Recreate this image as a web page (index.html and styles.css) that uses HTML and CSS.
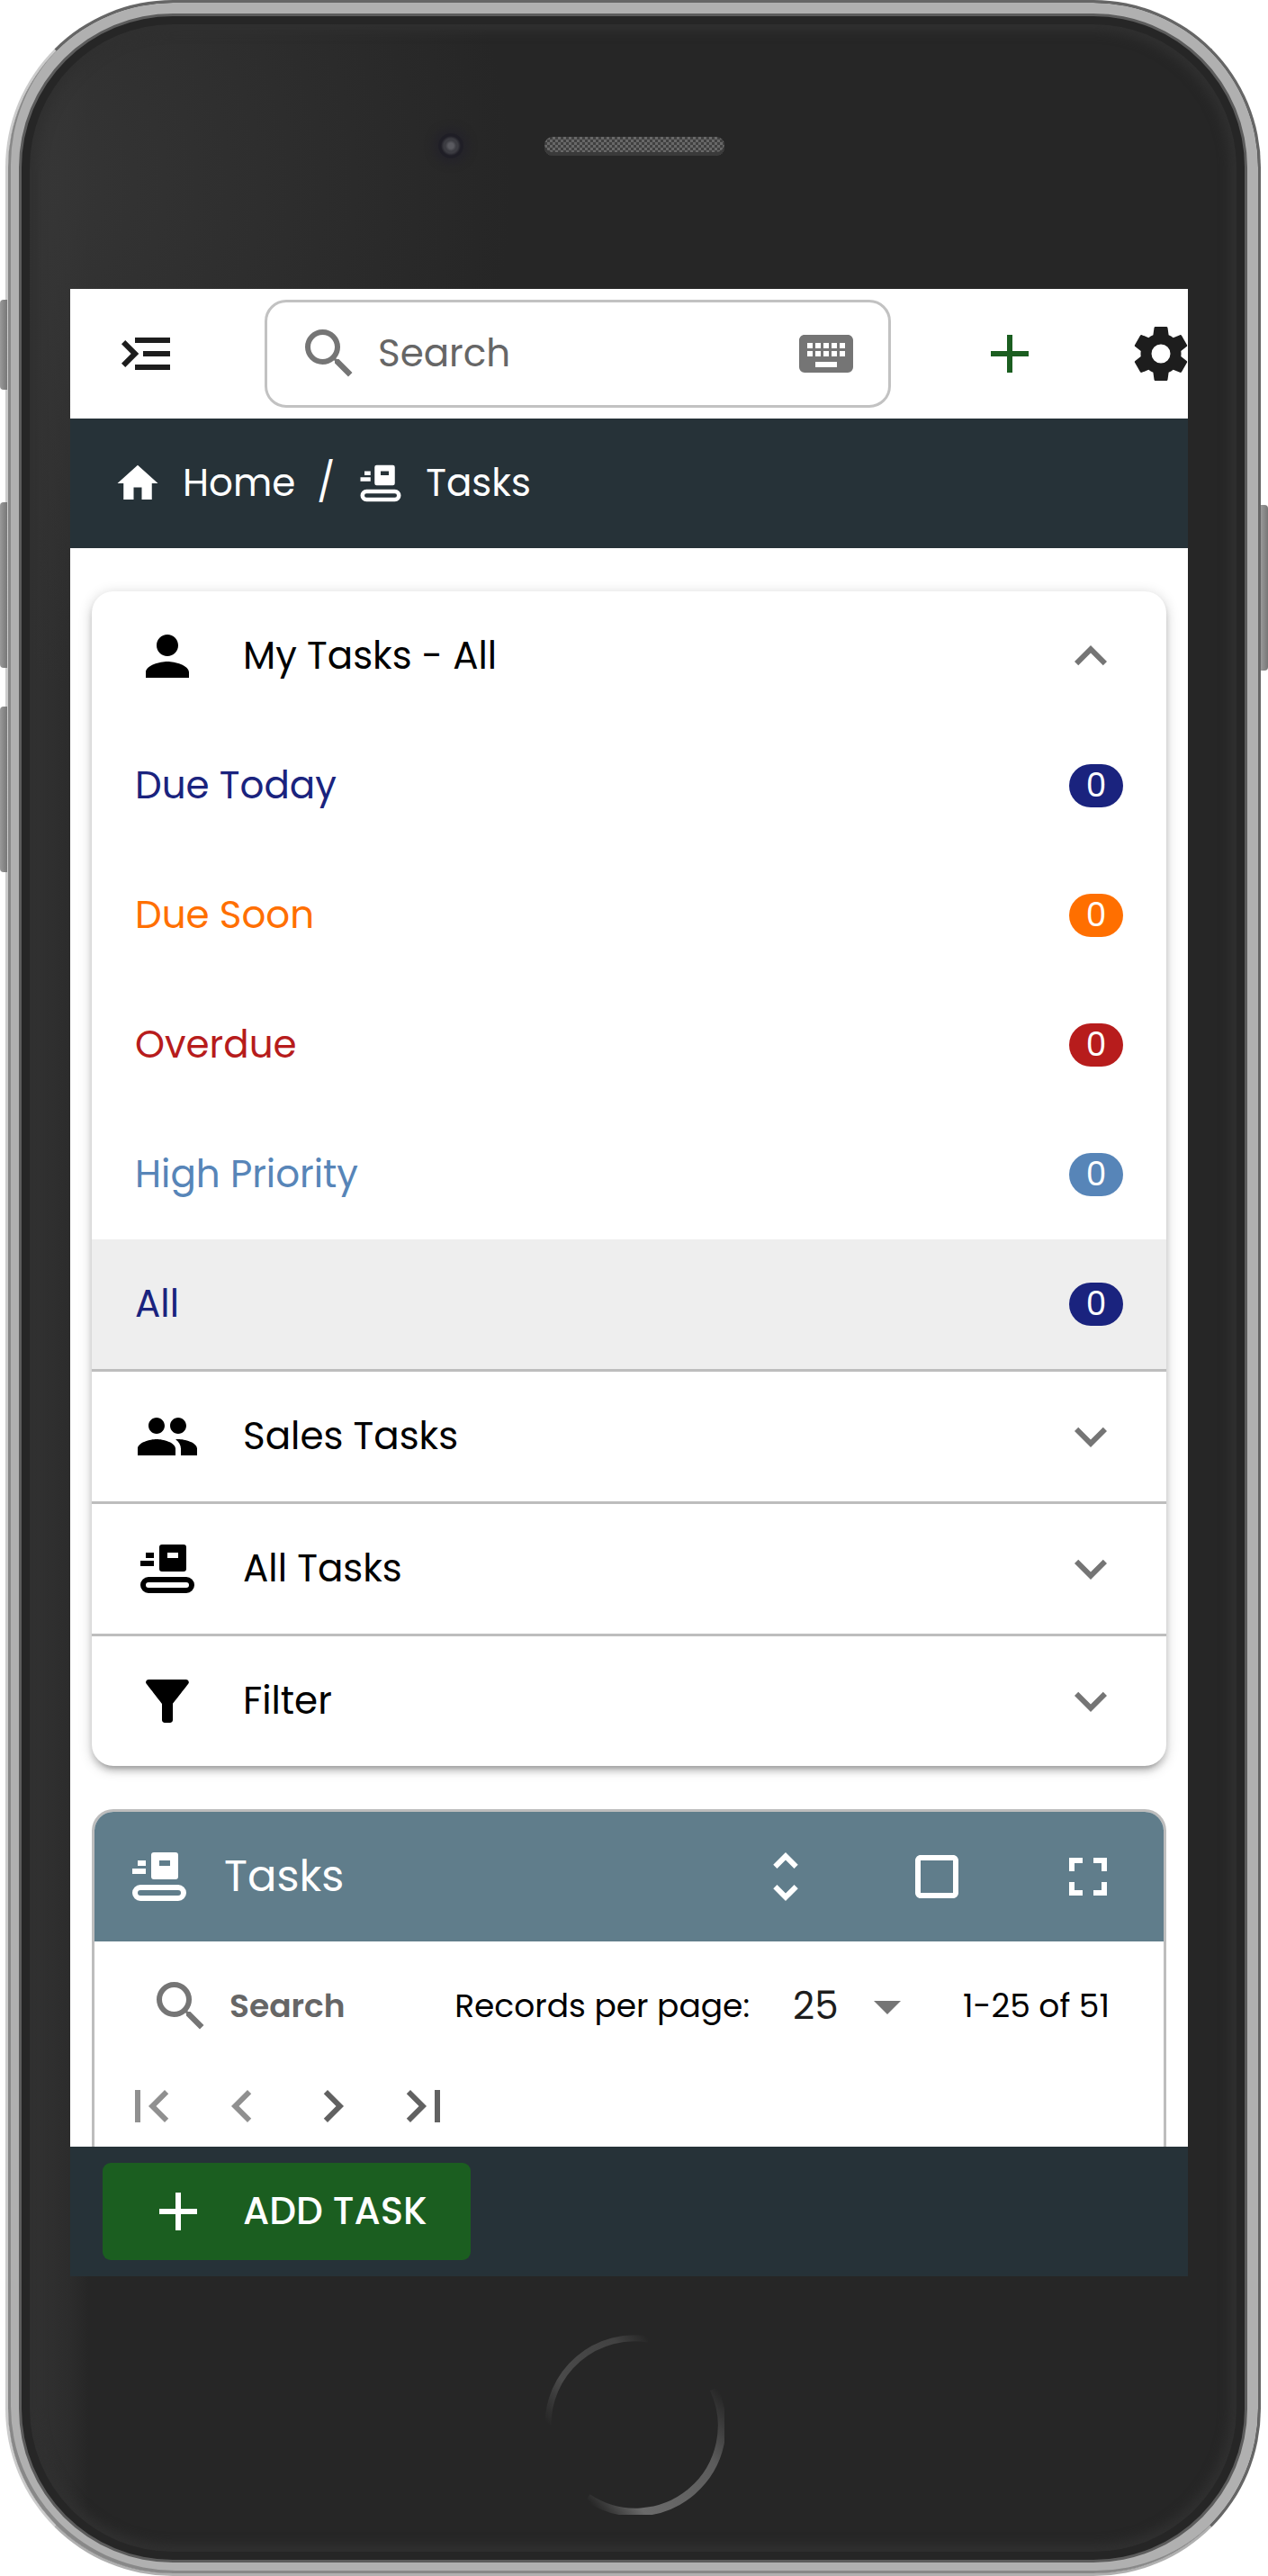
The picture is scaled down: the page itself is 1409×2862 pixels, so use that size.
FILE: index.html
```html
<!DOCTYPE html>
<html lang="en">
<head>
<meta charset="utf-8">
<meta name="viewport" content="width=device-width, initial-scale=1">
<title>Tasks</title>
<link rel="stylesheet" href="styles.css">
</head>
<body>
<svg class="sprite" aria-hidden="true">
  <symbol id="i-tasks" viewBox="0 0 24 24"><path fill-rule="evenodd" d="M10 3h8a1 1 0 0 1 1 1v8a1 1 0 0 1-1 1h-8a1 1 0 0 1-1-1V4a1 1 0 0 1 1-1zm2 3v2h4V6zM4 6h3v2H4zM2 9h5v2H2zM5 15h14a3 3 0 0 1 0 6H5a3 3 0 0 1 0-6zm0 2a1 1 0 0 0 0 2h14a1 1 0 0 0 0-2z"/></symbol>
  <symbol id="i-search" viewBox="0 0 24 24"><path d="M15.5 14h-.79l-.28-.27A6.471 6.471 0 0 0 16 9.500 6.500 6.500 0 1 0 9.500 16c1.610 0 3.090-.59 4.230-1.570l.27.28v.79l5 4.990L20.490 19l-4.990-5zm-6 0C7.010 14 5 11.990 5 9.500S7.010 5 9.500 5 14 7.010 14 9.500 11.990 14 9.500 14z"/></symbol>
  <symbol id="i-plus" viewBox="0 0 24 24"><path d="M19 13h-6v6h-2v-6H5v-2h6V5h2v6h6z"/></symbol>
  <symbol id="i-down" viewBox="0 0 24 24"><path d="M7.41 8.590L12 13.170l4.590-4.580L18 10l-6 6-6-6z"/></symbol>
  <symbol id="i-up" viewBox="0 0 24 24"><path d="M12 8l-6 6 1.410 1.410L12 10.830l4.590 4.580L18 14z"/></symbol>
</svg>

<div class="phone">
  <span class="side side-mute"></span>
  <span class="side side-up"></span>
  <span class="side side-down"></span>
  <span class="side side-power"></span>

  <div class="bezel">
    <span class="camera"></span>
    <span class="speaker"></span>
  </div>

  <div class="screen">
    <header class="topbar">
      <button class="icon-btn" type="button" aria-label="Open menu">
        <svg class="icon" viewBox="0 0 24 24"><path d="M3 15.610L4.410 17l5.010-5-5.010-5L3 8.390 6.560 12zM21 6H8v2h13zM21 13v-2H11v2zM21 18v-2H8v2z"/></svg>
      </button>
      <label class="searchbox">
        <svg class="icon muted"><use href="#i-search"/></svg>
        <input class="search-input" type="text" placeholder="Search" aria-label="Search">
        <svg class="icon muted" viewBox="0 0 24 24"><path d="M19 10h-2V8h2m0 5h-2v-2h2m-3-1h-2V8h2m0 5h-2v-2h2m0 6H8v-2h8M7 10H5V8h2m0 5H5v-2h2m1 0h2v2H8m0-5h2v2H8m3 1h2v2h-2m0-5h2v2h-2m9-5H4c-1.110 0-2 .89-2 2v10a2 2 0 0 0 2 2h16a2 2 0 0 0 2-2V7c0-1.110-.9-2-2-2z"/></svg>
      </label>
      <button class="icon-btn add" type="button" aria-label="Add"><svg class="icon"><use href="#i-plus"/></svg></button>
      <button class="icon-btn" type="button" aria-label="Settings">
        <svg class="icon" viewBox="0 0 24 24"><path d="M12 15.500A3.500 3.500 0 0 1 8.500 12 3.500 3.500 0 0 1 12 8.500a3.500 3.500 0 0 1 3.500 3.500 3.500 3.500 0 0 1-3.500 3.500m7.430-2.530c.04-.32.07-.64.07-.97 0-.33-.03-.66-.07-1l2.110-1.630c.19-.15.24-.42.12-.64l-2-3.460c-.12-.22-.39-.31-.61-.22l-2.490 1c-.52-.39-1.060-.73-1.690-.98l-.37-2.650A.506.506 0 0 0 14 2h-4c-.25 0-.46.18-.5.42l-.37 2.650c-.63.25-1.170.59-1.690.98l-2.490-1c-.22-.09-.49 0-.61.22l-2 3.460c-.13.22-.07.49.12.64L4.570 11c-.04.34-.07.67-.07 1 0 .33.03.65.07.97l-2.110 1.660c-.19.15-.25.42-.12.64l2 3.460c.12.22.39.3.61.22l2.490-1.010c.52.4 1.060.74 1.690.99l.37 2.650c.04.24.25.42.5.42h4c.25 0 .46-.18.5-.42l.37-2.650c.63-.26 1.170-.59 1.690-.99l2.490 1.010c.22.08.49 0 .61-.22l2-3.460c.12-.22.07-.49-.12-.64z"/></svg>
      </button>
    </header>

    <nav class="crumbs" aria-label="Breadcrumb">
      <a class="crumb" href="#home"><svg class="icon icon-sm" viewBox="0 0 24 24"><path d="M10 20v-6h4v6h5v-8h3L12 3 2 12h3v8z"/></svg>Home</a>
      <span>/</span>
      <a class="crumb" href="#tasks"><svg class="icon icon-sm"><use href="#i-tasks"/></svg>Tasks</a>
    </nav>

    <main class="content">
      <section class="card">
        <button class="row" type="button" aria-expanded="true">
          <svg class="icon" viewBox="0 0 24 24"><path d="M12 12c2.210 0 4-1.790 4-4s-1.790-4-4-4-4 1.790-4 4 1.790 4 4 4zm0 2c-2.670 0-8 1.340-8 4v2h16v-2c0-2.660-5.330-4-8-4z"/></svg>
          <span class="row-text">My Tasks - All</span>
          <svg class="icon muted"><use href="#i-up"/></svg>
        </button>
        <a class="row navy" href="#today"><span class="row-text">Due Today</span><span class="badge">0</span></a>
        <a class="row orange" href="#soon"><span class="row-text">Due Soon</span><span class="badge">0</span></a>
        <a class="row red" href="#overdue"><span class="row-text">Overdue</span><span class="badge">0</span></a>
        <a class="row blue" href="#priority"><span class="row-text">High Priority</span><span class="badge">0</span></a>
        <a class="row navy selected" href="#all"><span class="row-text">All</span><span class="badge">0</span></a>
        <button class="row divided" type="button" aria-expanded="false">
          <svg class="icon" viewBox="0 0 24 24"><path d="M16 11c1.660 0 2.990-1.340 2.990-3S17.660 5 16 5s-3 1.340-3 3 1.340 3 3 3zm-8 0c1.660 0 2.990-1.340 2.990-3S9.660 5 8 5 5 6.340 5 8s1.340 3 3 3zm0 2c-2.330 0-7 1.170-7 3.500V19h14v-2.500c0-2.330-4.670-3.500-7-3.500zm8 0c-.29 0-.62.02-.97.05 1.160.84 1.970 1.970 1.970 3.450V19h6v-2.500c0-2.330-4.670-3.500-7-3.500z"/></svg>
          <span class="row-text">Sales Tasks</span>
          <svg class="icon muted"><use href="#i-down"/></svg>
        </button>
        <button class="row divided" type="button" aria-expanded="false">
          <svg class="icon"><use href="#i-tasks"/></svg>
          <span class="row-text">All Tasks</span>
          <svg class="icon muted"><use href="#i-down"/></svg>
        </button>
        <button class="row divided" type="button" aria-expanded="false">
          <svg class="icon" viewBox="0 0 24 24"><path d="M4.250 5.610C6.270 8.200 10 13 10 13v6c0 .55.45 1 1 1h2c.55 0 1-.45 1-1v-6s3.720-4.800 5.740-7.390A.998.998 0 0 0 18.950 4H5.040c-.83 0-1.300.95-.79 1.610z"/></svg>
          <span class="row-text">Filter</span>
          <svg class="icon muted"><use href="#i-down"/></svg>
        </button>
      </section>

      <section class="panel">
        <div class="panel-head">
          <svg class="icon"><use href="#i-tasks"/></svg>
          <h2 class="panel-title">Tasks</h2>
          <div class="panel-tools">
            <button class="icon-btn" type="button" aria-label="Expand rows"><svg class="icon" viewBox="0 0 24 24"><path d="M12 5.830L15.170 9l1.410-1.410L12 3 7.410 7.590 8.830 9zm0 12.340L8.830 15l-1.410 1.410L12 21l4.590-4.590L15.170 15z"/></svg></button>
            <button class="icon-btn" type="button" aria-label="Select"><svg class="icon" viewBox="0 0 24 24"><path d="M18 4H6c-1.100 0-2 .9-2 2v12c0 1.100.9 2 2 2h12c1.100 0 2-.9 2-2V6c0-1.100-.9-2-2-2zm0 14H6V6h12z"/></svg></button>
            <button class="icon-btn" type="button" aria-label="Full screen"><svg class="icon" viewBox="0 0 24 24"><path d="M7 14H5v5h5v-2H7zM5 10h2V7h3V5H5zM17 17h-3v2h5v-5h-2zM14 5v2h3v3h2V5z"/></svg></button>
          </div>
        </div>
        <div class="table-bar">
          <label class="table-search">
            <svg class="icon muted"><use href="#i-search"/></svg>
            <input class="search-input bold" type="text" placeholder="Search" aria-label="Search tasks">
          </label>
          <label for="per-page">Records per page:</label>
          <div class="select-wrap">
            <select id="per-page" class="select"><option>25</option><option>50</option></select>
            <svg class="icon muted select-arrow" viewBox="0 0 24 24"><path d="M7 10l5 5 5-5z"/></svg>
          </div>
          <span>1-25 of 51</span>
        </div>
        <div class="pager">
          <button class="icon-btn" type="button" disabled aria-label="First page"><svg class="icon" viewBox="0 0 24 24"><path d="M18.410 16.590L13.820 12l4.590-4.590L17 6l-6 6 6 6zM6 6h2v12H6z"/></svg></button>
          <button class="icon-btn" type="button" disabled aria-label="Previous page"><svg class="icon" viewBox="0 0 24 24"><path d="M15.410 7.410L14 6l-6 6 6 6 1.410-1.410L10.830 12z"/></svg></button>
          <button class="icon-btn" type="button" aria-label="Next page"><svg class="icon" viewBox="0 0 24 24"><path d="M10 6L8.590 7.410 13.170 12l-4.580 4.590L10 18l6-6z"/></svg></button>
          <button class="icon-btn" type="button" aria-label="Last page"><svg class="icon" viewBox="0 0 24 24"><path d="M5.590 7.410L10.180 12l-4.590 4.590L7 18l6-6-6-6zM16 6h2v12h-2z"/></svg></button>
        </div>
      </section>
    </main>

    <footer class="actions">
      <button class="add-task" type="button"><svg class="icon"><use href="#i-plus"/></svg>ADD TASK</button>
    </footer>
  </div>

  <div class="bezel bezel-bottom">
    <svg class="home-ring" viewBox="0 0 200 200" fill="none" aria-hidden="true">
      <defs>
        <linearGradient id="ring-a" gradientUnits="userSpaceOnUse" x1="4" y1="100" x2="115" y2="4">
          <stop offset="0" stop-color="#262626"/><stop offset=".3" stop-color="#4a4a4a"/><stop offset=".8" stop-color="#424242"/><stop offset="1" stop-color="#262626"/>
        </linearGradient>
        <linearGradient id="ring-b" gradientUnits="userSpaceOnUse" x1="190" y1="58" x2="48" y2="184">
          <stop offset="0" stop-color="#262626"/><stop offset=".3" stop-color="#5c5c5c"/><stop offset=".8" stop-color="#6a6a6a"/><stop offset="1" stop-color="#262626"/>
        </linearGradient>
      </defs>
      <path stroke="url(#ring-a)" stroke-width="7" d="M4 100A96 96 0 0 1 115 5"/>
      <path stroke="url(#ring-b)" stroke-width="9" d="M188 60A96 96 0 0 1 48 181"/>
    </svg>
  </div>
</div>
</body>
</html>
```
FILE: styles.css
```css
* {
  box-sizing: border-box;
}

body {
  margin: 0;
  background: #fff;
  color: #000;
  font-family: Poppins, Inter, sans-serif;
  font-size: 42px;
  line-height: 60px;
}

button,
input,
select {
  margin: 0;
  padding: 0;
  border: 0;
  background: none;
  color: inherit;
  font: inherit;
}

a {
  color: inherit;
  text-decoration: none;
}

.sprite {
  display: none;
}

.icon {
  display: block;
  flex: none;
  width: 72px;
  height: 72px;
  fill: currentColor;
}

.icon-sm {
  width: 54px;
  height: 54px;
}

.icon-btn {
  flex: none;
}

.muted {
  color: #757575;
}

/* Device frame */
.phone {
  position: relative;
  margin: 0 8px 0 6px;
  border: 3px solid;
  border-color: #666 #666 #b0b0b0 #ccc;
  border-radius: 186px;
  background:
    radial-gradient(circle at 0 200px, #363636, rgba(38, 38, 38, 0) 560px),
    linear-gradient(to right, #363636, #2c2c2c 69px, #262626 90px);
  box-shadow:
    inset 3px -3px #888,
    inset 0 0 0 12px #b0b0b0,
    inset 0 0 0 15px #5c5c5c,
    inset 0 0 0 24px #262626,
    inset 0 0 12px 32px #303030;
}

.bezel {
  display: grid;
  grid-template-columns: 1fr auto 1fr;
  column-gap: 90px;
  align-items: center;
  height: 318px;
  padding-left: 3px;
}

.bezel-bottom {
  height: 330px;
}

.camera {
  justify-self: end;
  width: 28px;
  height: 28px;
  border-radius: 50%;
  background: radial-gradient(circle, #5a5a60 0 3px, #3c3c42 6px 8px, #1f1e26 11px);
  box-shadow: 0 0 8px 6px #25242a;
}

.speaker {
  width: 200px;
  height: 21px;
  border-radius: 9px;
  background: repeating-conic-gradient(#686868 0 25%, #404040 0 50%) 0 0 / 6px 6px;
  box-shadow: inset 0 -4px #3a3a3a;
}

.home-ring {
  grid-column: 2;
  width: 200px;
  height: 200px;
}

.side {
  position: absolute;
  left: -9px;
  width: 8px;
  border-radius: 4px 0 0 4px;
  background: linear-gradient(to right, #999, #777);
}

.side-mute {
  top: 330px;
  height: 100px;
}

.side-up {
  top: 555px;
  height: 184px;
}

.side-down {
  top: 782px;
  height: 184px;
}

.side-power {
  top: 558px;
  right: -11px;
  left: auto;
  height: 184px;
  border-radius: 0 4px 4px 0;
}

/* App */
.screen {
  margin: 0 78px 0 69px;
  overflow: hidden;
  background: #fff;
}

.topbar {
  display: flex;
  align-items: center;
  gap: 96px;
  height: 144px;
  margin-right: -6px;
  padding-left: 48px;
  color: #1d1d1d;
}

.add {
  color: #1b5e20;
}

.searchbox {
  display: flex;
  flex: 1;
  align-items: center;
  gap: 18px;
  min-width: 0;
  height: 120px;
  padding: 0 33px;
  border: 3px solid #c2c2c2;
  border-radius: 24px;
}

.search-input {
  flex: 1;
  width: 100%;
  min-width: 0;
  outline: 0;
}

.search-input::placeholder {
  color: #666;
  opacity: 1;
}

.bold {
  font-weight: 600;
}

.crumbs {
  display: flex;
  align-items: center;
  gap: 24px;
  height: 144px;
  padding: 0 48px;
  background: #263238;
  color: #fff;
}

.crumb {
  display: flex;
  align-items: center;
  gap: 23px;
}

.content {
  padding: 48px 24px 0;
}

.card {
  overflow: hidden;
  border-radius: 24px;
  background: #fff;
  box-shadow:
    0 3px 15px rgba(0, 0, 0, 0.2),
    0 6px 6px rgba(0, 0, 0, 0.14),
    0 9px 3px -6px rgba(0, 0, 0, 0.12);
}

.row {
  display: flex;
  align-items: center;
  gap: 48px;
  width: 100%;
  height: 144px;
  padding: 0 48px;
  text-align: left;
}

.row-text {
  flex: 1;
}

.divided {
  height: 147px;
  border-top: 3px solid #bdbdbd;
}

.selected {
  background: #eee;
}

.badge {
  min-width: 60px;
  height: 48px;
  border-radius: 24px;
  background: #1a237e;
  color: #fff;
  font-size: 36px;
  line-height: 48px;
  text-align: center;
}

.navy {
  color: #1a237e;
}

.orange {
  color: #ff6f00;
}

.orange .badge {
  background: #ff6f00;
}

.red {
  color: #b71c1c;
}

.red .badge {
  background: #b71c1c;
}

.blue {
  color: #5785b8;
}

.blue .badge {
  background: #5785b8;
}

.panel {
  margin-top: 48px;
  border: 3px solid #bdbdbd;
  border-bottom: 0;
  border-radius: 24px 24px 0 0;
}

.panel-head {
  display: flex;
  align-items: center;
  gap: 36px;
  height: 144px;
  padding: 0 48px 0 36px;
  border-radius: 21px 21px 0 0;
  background: #607d8b;
  color: #fff;
}

.panel-title {
  margin: 0;
  font-size: 48px;
  font-weight: 400;
}

.panel-tools {
  display: flex;
  gap: 96px;
  margin-left: auto;
}

.table-bar {
  display: flex;
  align-items: center;
  gap: 48px;
  height: 144px;
  padding: 0 60px;
  font-size: 36px;
  white-space: nowrap;
}

.table-search {
  display: flex;
  flex: 1;
  align-items: center;
  gap: 18px;
  min-width: 0;
}

.select-wrap {
  display: flex;
  align-items: center;
  position: relative;
}

.select {
  appearance: none;
  width: 141px;
  color: #1d1d1d;
  font-size: 42px;
}

.select-arrow {
  position: absolute;
  right: 0;
  pointer-events: none;
}

.pager {
  display: flex;
  gap: 29px;
  padding: 3px 27px 9px;
  color: #616161;
}

.pager .icon-btn:disabled {
  color: #909090;
}

.actions {
  display: flex;
  align-items: center;
  height: 144px;
  padding: 0 36px;
  background: #263238;
}

.add-task {
  display: flex;
  align-items: center;
  gap: 36px;
  height: 108px;
  padding: 0 48px;
  border-radius: 9px;
  background: #1b5e20;
  color: #fff;
  font-weight: 500;
}
```
